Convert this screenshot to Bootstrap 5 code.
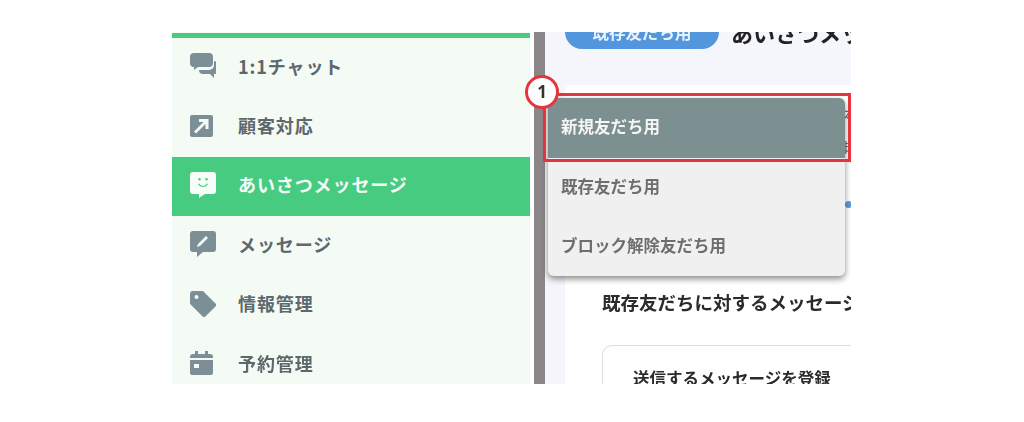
<!DOCTYPE html>
<html lang="ja">
<head>
<meta charset="utf-8">
<title>あいさつメッセージ</title>
<link href="https://cdn.jsdelivr.net/npm/bootstrap@5.3.0/dist/css/bootstrap.min.css" rel="stylesheet">
<style>
html,body{height:422px;overflow:hidden;background:#fff;}
body{font-family:"Noto Sans CJK JP","Liberation Sans",sans-serif;}
.shot{width:679px;height:352px;margin:32px 0 0 172px;overflow:hidden;position:relative;filter:blur(.45px);}
.side{width:358px;background:#f4fbf5;padding-top:1px;}
.side-top{height:5px;background:#46cb80;}
.side-row{height:59.4px;padding:0 0 3px 18px;gap:22px;color:#5d686d;font-size:18px;font-weight:700;letter-spacing:.9px;}
.side-row svg{width:26px;height:26px;fill:#7c8e96;flex:none;}
.side-row.on{background:#46cb80;color:#f4fbf6;}
.side-row.on svg{fill:#f7fdf9;}
.sep{width:11px;margin-left:4px;background:#8b8789;flex:none;}
.main{flex:1;background:#f5f6fb;padding-left:20px;min-width:0;overflow:hidden;}
.topline{height:53px;margin-top:-17px;gap:12px;white-space:nowrap;}
.pill{width:154px;height:34px;background:#5297dd;color:#e9f2fb;border-radius:17px;font-size:16.5px;font-weight:700;}
.ttl{font-size:22px;line-height:30px;margin-top:2px;font-weight:700;color:#222;}
.sheet{background:#fff;margin-top:17px;height:320px;padding:14px 0 0 37px;white-space:nowrap;border-radius:6px 0 0 0;}
.peek{height:32px;line-height:32px;margin-left:236px;font-size:15px;color:#777;}
.peek-dot{width:7px;height:7px;border-radius:50%;background:#5f9ad8;margin:38px 0 0 243px;}
.sheet-h{font-size:18.5px;font-weight:700;color:#2b2b2b;line-height:26px;margin-top:81px;}
.inner{margin-top:30px;border:1px solid #dedede;border-right:0;border-radius:10px 0 0 0;padding:21px 0 0 30px;height:60px;font-size:16.5px;font-weight:700;color:#2b2b2b;line-height:22px;}
.pop{position:absolute;left:376px;top:66px;width:297px;background:#f0f0f0;border-radius:6px;box-shadow:0 3px 6px rgba(0,0,0,.45);overflow:hidden;}
.pop-i{height:59px;padding:0 0 3px 13px;color:#6e6e6e;font-size:16.5px;font-weight:700;}
.pop-i.on{height:60px;background:#7c8f91;color:#f5f5f5;}
.mark-box{position:absolute;left:371px;top:61px;width:308px;height:69px;border:3px solid #e5343c;}
.mark-num{position:absolute;left:353px;top:43px;width:34px;height:34px;border:3px solid #e5343c;border-radius:50%;background:#fff;color:#333;font-family:"Noto Sans",sans-serif;font-size:17px;font-weight:700;}
</style>
</head>
<body>
<div class="shot d-flex">
  <nav class="side flex-shrink-0">
    <div class="side-top"></div>
    <div class="side-row d-flex align-items-center">
      <svg viewBox="0 0 26 26"><path d="M4 0h15a4 4 0 0 1 4 4v6a4 4 0 0 1-4 4H8l-4 3v-3a4 4 0 0 1-4-4V4a4 4 0 0 1 4-4z"/><path d="M24 8a3 3 0 0 1 3 3v7a3 3 0 0 1-3 3v4l-4-4h-7a4 4 0 0 1-4-4h10a5 5 0 0 0 5-5z"/></svg>
      <span>1:1チャット</span>
    </div>
    <div class="side-row d-flex align-items-center">
      <svg viewBox="0 0 26 26"><path fill-rule="evenodd" d="M2 2h19a2 2 0 0 1 2 2v18a2 2 0 0 1-2 2H2a2 2 0 0 1-2-2V4a2 2 0 0 1 2-2zm7 4v3h4.500L4 18.500 6 20.500 15.500 11v5h3V6z"/></svg>
      <span>顧客対応</span>
    </div>
    <div class="side-row on d-flex align-items-center">
      <svg viewBox="0 0 26 26"><path fill-rule="evenodd" d="M3 0h20a3 3 0 0 1 3 3v16a3 3 0 0 1-3 3h-8l-6 4v-4H3a3 3 0 0 1-3-3V3a3 3 0 0 1 3-3zm6.500 6a1.300 1.300 0 1 0 0 2.600 1.300 1.300 0 0 0 0-2.600zm7 0a1.300 1.300 0 1 0 0 2.600 1.300 1.300 0 0 0 0-2.600zM8 12c1 2 3 3 5 3s4-1 5-3l-1.200-.6C16 13 14.500 13.700 13 13.700S10 13 9.200 11.400z"/></svg>
      <span>あいさつメッセージ</span>
    </div>
    <div class="side-row d-flex align-items-center">
      <svg viewBox="0 0 26 26"><path fill-rule="evenodd" d="M3 0h20a3 3 0 0 1 3 3v15a3 3 0 0 1-3 3H13l-6 5v-5H3a3 3 0 0 1-3-3V3a3 3 0 0 1 3-3zm13 5-8 8-1 3 3-1 8-8z"/></svg>
      <span>メッセージ</span>
    </div>
    <div class="side-row d-flex align-items-center">
      <svg viewBox="0 0 26 26"><path fill-rule="evenodd" d="M3 0h9a2 2 0 0 1 1.500.6l12 12a2 2 0 0 1 0 2.800L15.400 25.400a2 2 0 0 1-2.800 0L.6 13.400A2 2 0 0 1 0 12V3a3 3 0 0 1 3-3zm3.500 4a2 2 0 1 0 0 4 2 2 0 0 0 0-4z"/></svg>
      <span>情報管理</span>
    </div>
    <div class="side-row d-flex align-items-center">
      <svg viewBox="0 0 26 26"><path fill-rule="evenodd" d="M5 1h3v3h7V1h3v3h2a3 3 0 0 1 3 3v1H0V7a3 3 0 0 1 3-3h2zM0 10h23v13a2 2 0 0 1-2 2H2a2 2 0 0 1-2-2zm4 4v4h5v-4z"/></svg>
      <span>予約管理</span>
    </div>
  </nav>
  <div class="sep"></div>
  <main class="main">
    <div class="topline d-flex align-items-start">
      <div class="pill d-flex align-items-center justify-content-center flex-shrink-0">既存友だち用</div>
      <div class="ttl">あいさつメッセージ</div>
    </div>
    <div class="sheet">
      <div class="peek">ス</div>
      <div class="peek">ま</div>
      <div class="peek-dot"></div>
      <div class="sheet-h">既存友だちに対するメッセージ</div>
      <div class="inner">送信するメッセージを登録</div>
    </div>
  </main>
  <div class="pop">
    <div class="pop-i on d-flex align-items-center">新規友だち用</div>
    <div class="pop-i d-flex align-items-center">既存友だち用</div>
    <div class="pop-i d-flex align-items-center">ブロック解除友だち用</div>
  </div>
  <div class="mark-box"></div>
  <div class="mark-num d-flex align-items-center justify-content-center">1</div>
</div>
<script src="https://cdn.jsdelivr.net/npm/bootstrap@5.3.0/dist/js/bootstrap.bundle.min.js"></script>
</body>
</html>
